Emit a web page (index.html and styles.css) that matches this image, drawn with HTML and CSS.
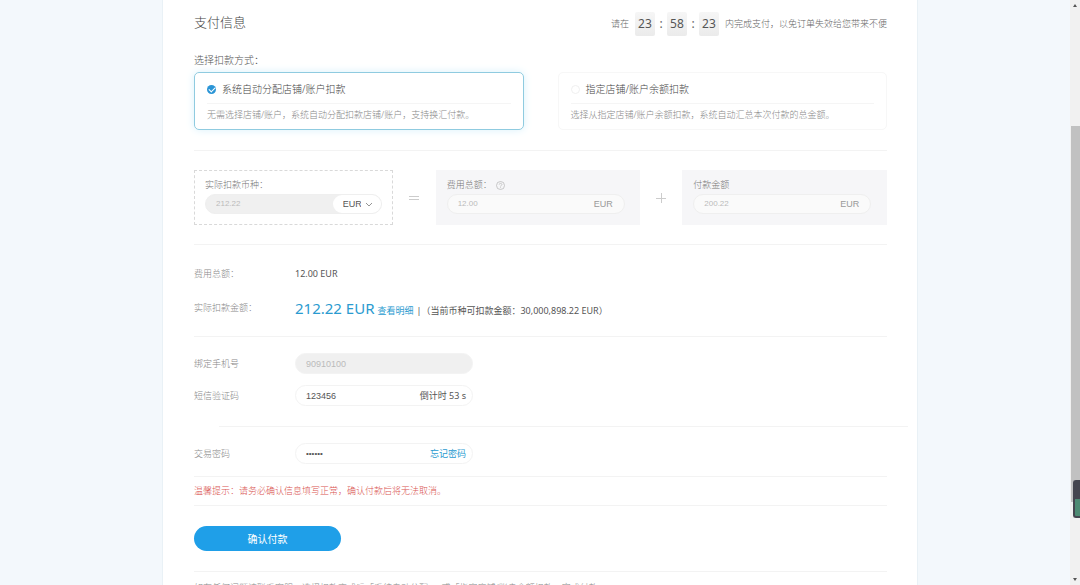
FILE: index.html
```html
<!DOCTYPE html>
<html lang="zh-CN">
<head>
    <meta charset="UTF-8">
    <meta name="viewport" content="width=device-width, initial-scale=1.0">
    <title>支付信息</title>
    <link rel="stylesheet" href="styles.css">
</head>
<body>
    <main class="panel">
        <!-- 标题与倒计时 -->
        <header class="header">
            <h1>支付信息</h1>
            <div class="countdown">
                <span>请在</span>
                <div class="clock">
                    <b>23</b><i>:</i><b>58</b><i>:</i><b>23</b>
                </div>
                <span>内完成支付，以免订单失效给您带来不便</span>
            </div>
        </header>

        <form class="form">
            <!-- 扣款方式 -->
            <fieldset class="methods">
                <legend>选择扣款方式：</legend>
                <div class="method-list">
                    <label class="method active">
                        <span class="method-title"><input type="radio" name="method" checked>系统自动分配店铺/账户扣款</span>
                        <span class="method-desc">无需选择店铺/账户，系统自动分配扣款店铺/账户，支持换汇付款。</span>
                    </label>
                    <label class="method">
                        <span class="method-title"><input type="radio" name="method">指定店铺/账户余额扣款</span>
                        <span class="method-desc">选择从指定店铺/账户余额扣款，系统自动汇总本次付款的总金额。</span>
                    </label>
                </div>
            </fieldset>

            <!-- 金额计算 -->
            <section class="formula">
                <div class="box dashed">
                    <label for="actual">实际扣款币种：</label>
                    <div class="pill gray">
                        <input id="actual" type="text" value="212.22" disabled>
                        <div class="currency">
                            <select aria-label="币种">
                                <option>EUR</option>
                            </select>
                            <svg width="8" height="5" viewBox="0 0 8 5"><path d="M1 1l3 3 3-3" fill="none" stroke="#888" stroke-width="0.9"/></svg>
                        </div>
                    </div>
                </div>
                <svg class="sign" width="12" height="12" viewBox="0 0 12 12"><path d="M1 4.5h10M1 7.5h10" stroke="#ccc"/></svg>
                <div class="box">
                    <label for="fee">费用总额：
                        <svg width="9" height="9" viewBox="0 0 9 9" fill="none" stroke="#bbb" stroke-width="0.8"><circle cx="4.5" cy="4.5" r="4"/><path d="M3.2 3.6c0-1.7 2.7-1.6 2.7 0 0 .9-1.4.9-1.4 2M4.5 6.3v.8"/></svg>
                    </label>
                    <div class="pill">
                        <input id="fee" type="text" value="12.00" disabled>
                        <span class="unit">EUR</span>
                    </div>
                </div>
                <svg class="sign" width="12" height="12" viewBox="0 0 12 12"><path d="M1 6.5h10M6.5 1v10" stroke="#ccc"/></svg>
                <div class="box">
                    <label for="pay">付款金额</label>
                    <div class="pill">
                        <input id="pay" type="text" value="200.22" disabled>
                        <span class="unit">EUR</span>
                    </div>
                </div>
            </section>

            <!-- 汇总 -->
            <dl class="summary">
                <div class="row">
                    <dt>费用总额：</dt>
                    <dd>12.00 EUR</dd>
                </div>
                <div class="row">
                    <dt>实际扣款金额：</dt>
                    <dd>
                        <strong>212.22 EUR</strong>
                        <a href="#">查看明细</a>
                        <span class="bar">|</span>
                        <span>（当前币种可扣款金额：30,000,898.22 EUR）</span>
                    </dd>
                </div>
            </dl>

            <!-- 验证 -->
            <section class="verify">
                <div class="row">
                    <label for="phone">绑定手机号</label>
                    <div class="field gray">
                        <input id="phone" type="text" value="90910100" disabled>
                    </div>
                </div>
                <div class="row">
                    <label for="code">短信验证码</label>
                    <div class="field">
                        <input id="code" type="text" value="123456">
                        <span>倒计时 53 s</span>
                    </div>
                </div>
            </section>
            <section class="password">
                <div class="row">
                    <label for="password">交易密码</label>
                    <div class="field">
                        <input id="password" type="password" value="123456">
                        <a href="#">忘记密码</a>
                    </div>
                </div>
            </section>

            <p class="tip">温馨提示：请务必确认信息填写正常，确认付款后将无法取消。</p>

            <div class="submit">
                <button type="submit">确认付款</button>
            </div>
        </form>

        <footer class="notes">如有任何问题请联系客服，选择扣款方式后「系统自动分配」，或「指定店铺/账户余额扣款」完成付款。</footer>
    </main>

    <!-- 滚动条与侧边挂件 -->
    <div class="scrollbar">
        <span class="arrow up"></span>
        <span class="thumb"></span>
        <span class="arrow down"></span>
        <span class="widget"></span>
    </div>
</body>
</html>
```
FILE: styles.css
```css
* {
    box-sizing: border-box;
}

body {
    margin: 0;
    height: 100vh;
    overflow: hidden;
    background: #f3f8fc;
    color: #666;
    font-family: "Noto Sans", "Noto Sans CJK SC", sans-serif;
    font-size: 9px;
    font-weight: 300;
    line-height: 12px;
}

h1, p, dl, dd, fieldset {
    margin: 0;
}

input, select, button {
    font: inherit;
    color: inherit;
}

a {
    color: #2a9bd0;
    text-decoration: none;
}

.panel {
    max-width: 756px;
    margin: 0 auto;
    padding: 0 30px 0 31px;
    background: #fff;
    border: solid #e9f1f6;
    border-width: 0 1px;
}

/* 标题 */
.header {
    display: flex;
    justify-content: space-between;
    align-items: center;
    height: 48px;
}

h1 {
    padding-bottom: 4px;
    font-size: 13px;
    font-weight: 300;
    line-height: 18px;
    color: #444;
}

.countdown,
.clock {
    display: flex;
    align-items: center;
}

.countdown {
    gap: 6px;
}

.clock b {
    width: 20px;
    border-radius: 2px;
    background: linear-gradient(#f6f6f6, #ebebeb);
    font-size: 12px;
    font-weight: 400;
    line-height: 24px;
    text-align: center;
    color: #555;
}

.clock i {
    width: 12px;
    font-size: 12px;
    font-style: normal;
    font-weight: 400;
    text-align: center;
}

/* 扣款方式 */
.methods {
    padding: 0 0 20px;
    border: 0;
    border-bottom: 1px solid #f3f3f3;
}

legend {
    padding: 4px 0;
    font-size: 10px;
    line-height: 16px;
    color: #555;
}

.method-list {
    display: grid;
    grid-template-columns: 1fr 1fr;
    gap: 34px;
}

.method {
    padding: 7px 12px;
    border: 1px solid #f7f7f7;
    border-radius: 5px;
}

.method.active {
    border-color: #8fcbe0;
    box-shadow: 0 0 8px #d9f1fb;
}

.method-title {
    display: flex;
    align-items: center;
    gap: 6px;
    padding: 1px 0 6px;
    border-bottom: 1px solid #f5f5f5;
    font-size: 10px;
    line-height: 16px;
    color: #444;
}

.method-title input {
    appearance: none;
    width: 9px;
    height: 9px;
    margin: 0;
    border: 1px solid #f0f0f0;
    border-radius: 50%;
}

.method-title input:checked {
    border: 0;
    background: #2b95d6;
}

.method-title input:checked::after {
    content: "";
    display: block;
    width: 5px;
    height: 3px;
    margin: 2px;
    border: solid #fff;
    border-width: 0 0 1px 1px;
    transform: rotate(-45deg);
}

.method-desc {
    display: block;
    padding-top: 4px;
    line-height: 14px;
    color: #888;
}

/* 金额计算 */
.formula {
    display: grid;
    grid-template-columns: 199fr 43fr 205fr 42fr 205fr;
    padding: 19px 0;
    border-bottom: 1px solid #f3f3f3;
}

.sign {
    place-self: center;
}

.box {
    padding: 8px 10px 10px;
    border: 1px solid #f6f6f8;
    background: #f6f6f8;
    color: #777;
}

.box.dashed {
    border: 1px dashed #d9d9d9;
    background: none;
}

.box > label {
    display: flex;
    align-items: center;
    gap: 4px;
    height: 12px;
}

.pill {
    display: flex;
    align-items: center;
    max-width: 178px;
    height: 20px;
    margin-top: 3px;
    border: 1px solid #efefef;
    border-radius: 10px;
    background: #fafafa;
    font-family: "Liberation Sans", sans-serif;
}

.pill input,
.field input {
    flex: 1;
    min-width: 0;
    padding: 0 0 0 10px;
    border: 0;
    background: none;
    outline: 0;
}

.pill input {
    font-size: 8px;
    color: #bbb;
}

.pill.gray,
.field.gray {
    background: #f0f0f0;
}

.currency {
    display: flex;
    align-items: center;
    gap: 4px;
    height: 18px;
    padding: 0 8px 0 10px;
    border-radius: 9px;
    background: #fff;
}

.currency select {
    appearance: none;
    width: 18px;
    padding: 0;
    border: 0;
    background: none;
    color: #555;
}

.unit {
    padding-right: 11px;
    color: #999;
}

/* 汇总与表单行 */
.row {
    display: grid;
    grid-template-columns: 101px 1fr;
    align-items: center;
    color: #555;
}

dt,
.row > label {
    color: #888;
}

.summary {
    padding: 17px 0 16px;
    border-bottom: 1px solid #f3f3f3;
}

.summary .row {
    height: 24px;
}

.summary .row + .row {
    margin-top: 10px;
}

dd {
    display: flex;
    align-items: baseline;
    font-weight: 400;
}

dd strong {
    margin-right: 3px;
    font-size: 15px;
    font-weight: 400;
    line-height: 20px;
    color: #2a9bd0;
}

.bar {
    padding-left: 3px;
}

.verify {
    padding: 16px 0 20px;
}

.verify .row + .row {
    margin-top: 11px;
}

.field {
    display: flex;
    align-items: center;
    width: 178px;
    height: 21px;
    padding-right: 6px;
    border: 1px solid #f3f3f3;
    border-radius: 11px;
    font-weight: 400;
}

.field input {
    font-family: "Liberation Sans", sans-serif;
}

.field.gray input {
    color: #bbb;
}

.password {
    padding-bottom: 12px;
    border-bottom: 1px solid #f3f3f3;
}

.password::before {
    content: "";
    display: block;
    height: 1px;
    margin: 0 -21px 16px 25px;
    background: #f3f3f3;
}

.password input {
    font-size: 8px;
}

.tip {
    padding: 8px 0;
    border-bottom: 1px solid #f3f3f3;
    color: #d9534f;
}

/* 提交 */
.submit {
    padding: 20px 0;
    border-bottom: 1px solid #f3f3f3;
}

button {
    display: block;
    width: 147px;
    height: 25px;
    padding: 0;
    border: 0;
    border-radius: 13px;
    background: #1f9fe8;
    color: #fff;
    font-size: 10px;
    font-weight: 400;
}

.notes {
    padding-top: 10px;
    color: #888;
}

/* 滚动条 */
.scrollbar {
    position: fixed;
    top: 0;
    right: 0;
    bottom: 0;
    width: 10px;
    background: #f1f1f1;
}

.thumb {
    position: absolute;
    top: 21.5%;
    bottom: 14.2%;
    right: 0;
    width: 9px;
    background: #c1c1c1;
}

.arrow {
    position: absolute;
    left: 3px;
    border: 2px solid transparent;
}

.arrow.up {
    top: 2px;
    border-bottom: 3px solid #555;
}

.arrow.down {
    bottom: 2px;
    border-top: 3px solid #555;
}

.widget {
    position: absolute;
    top: 82%;
    right: 0;
    width: 7px;
    height: 38px;
    border: 2px solid #45464f;
    border-right: 0;
    border-radius: 3px 0 0 3px;
    background: linear-gradient(#45464f 50%, #4d8a72 50%);
}
```
